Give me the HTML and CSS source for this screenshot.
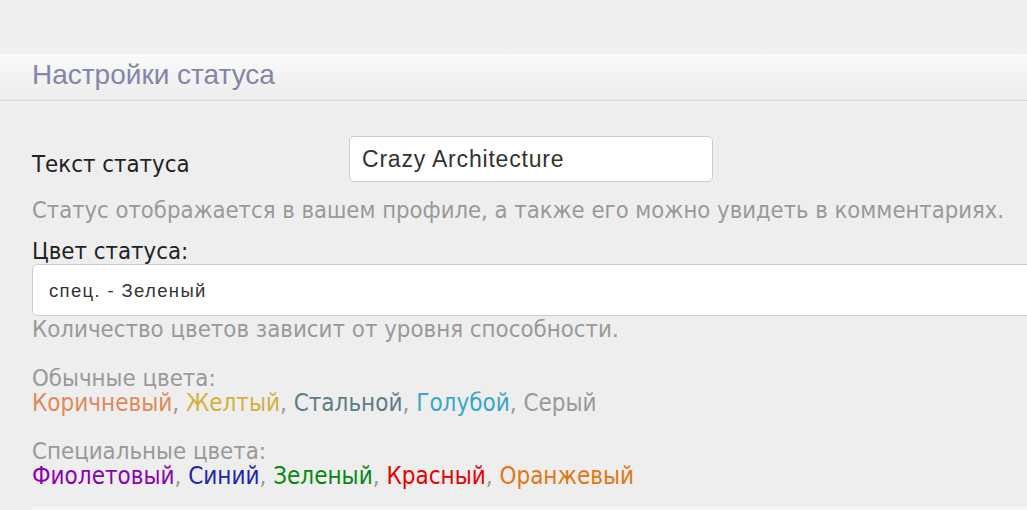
FILE: index.html
```html
<!DOCTYPE html>
<html lang="ru">
<head>
<meta charset="utf-8">
<link rel="stylesheet" href="styles.css">
</head>
<body>
<div class="topband"></div>
<div class="panel-head">
  <h2 class="panel-title">Настройки статуса</h2>
</div>
<div class="panel-body">
  <div class="row">
    <label class="label">Текст статуса</label>
    <div class="input">Crazy Architecture</div>
  </div>
  <p class="help help1">Статус отображается в вашем профиле, а также его можно увидеть в комментариях.</p>
  <div class="color-label">Цвет статуса:</div>
  <div class="select">спец. - Зеленый</div>
  <p class="help help2">Количество цветов зависит от уровня способности.</p>
  <div class="group">
    <div class="group-title">Обычные цвета:</div>
    <div class="list"><span class="c-brown">Коричневый</span><span class="sep">,</span> <span class="c-yellow">Желтый</span><span class="sep">,</span> <span class="c-steel">Стальной</span><span class="sep">,</span> <span class="c-blue">Голубой</span><span class="sep">,</span> <span class="c-gray">Серый</span></div>
  </div>
  <div class="group group2">
    <div class="group-title">Специальные цвета:</div>
    <div class="list"><span class="c-violet">Фиолетовый</span><span class="sep">,</span> <span class="c-navy">Синий</span><span class="sep">,</span> <span class="c-green">Зеленый</span><span class="sep">,</span> <span class="c-red">Красный</span><span class="sep">,</span> <span class="c-orange">Оранжевый</span></div>
  </div>
  <div class="bottom-strip"></div>
</div>
</body>
</html>
```
FILE: styles.css
```css
html, body {
  margin: 0;
  padding: 0;
  background: #eeeeee;
  overflow: hidden;
}
body {
  font-family: "DejaVu Sans Condensed", "DejaVu Sans", Verdana, sans-serif;
  font-size: 23.8px;
  line-height: 25px;
  width: 1027px;
  height: 510px;
}
.topband {
  height: 54px;
  background: #efefef;
}
.panel-head {
  height: 46px;
  border-bottom: 1px solid #d4d4d4;
  background: linear-gradient(#fafafa, #ececec);
  padding-left: 32px;
}
.panel-title {
  margin: 0;
  font-family: "Liberation Sans", Arial, sans-serif;
  font-weight: normal;
  font-size: 28px;
  line-height: 42px;
  color: #8386a6;
}
.panel-body {
  padding: 35px 0 0 32px;
}
.row {
  display: flex;
  align-items: flex-start;
  height: 46px;
}
.label {
  color: #222;
  width: 317px;
  padding-top: 16px;
}
.input {
  box-sizing: border-box;
  width: 364px;
  height: 46px;
  background: #fff;
  border: 1px solid #cccccc;
  border-radius: 5px;
  padding-left: 12px;
  font-family: "Liberation Sans", Arial, sans-serif;
  font-size: 23px;
  letter-spacing: 0.8px;
  color: #333;
  display: flex;
  align-items: center;
}
.help {
  margin: 0;
  color: #999;
}
.help1 {
  margin-top: 16px;
  font-size: 23.6px;
}
.color-label {
  color: #222;
  margin-top: 16px;
}
.select {
  box-sizing: border-box;
  height: 52px;
  margin-right: -10px;
  background: #fff;
  border: 1px solid #cccccc;
  border-radius: 5px;
  padding-left: 16px;
  font-family: "Liberation Sans", Arial, sans-serif;
  font-size: 18.5px;
  letter-spacing: 1.35px;
  color: #333;
  display: flex;
  align-items: center;
}
.help2 {
  margin-top: 1px;
}
.group {
  margin-top: 24px;
  color: #999;
}
.group2 {
  margin-top: 23px;
}
.group-title {
  height: 25px;
}
.list {
  height: 25px;
  font-size: 24px;
}
.list span {
  display: inline-block;
  vertical-align: top;
  height: 25px;
}
.sep { color: #999; }
.c-brown { color: #e0895c; }
.c-yellow { color: #d4b03c; }
.c-steel { color: #5c7c88; }
.c-blue { color: #38a7c9; }
.c-gray { color: #999; }
.c-violet { color: #8b00b0; }
.c-navy { color: #1b24b3; }
.c-green { color: #078714; }
.c-red { color: #e60000; }
.c-orange { color: #e57511; }
.bottom-strip {
  margin-top: 18px;
  height: 10px;
  background: #f4f4f4;
}
```
